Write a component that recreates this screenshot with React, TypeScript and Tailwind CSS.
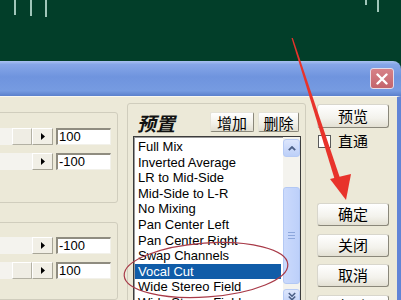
const PRESETS = [
  "Full Mix",
  "Inverted Average",
  "LR to Mid-Side",
  "Mid-Side to L-R",
  "No Mixing",
  "Pan Center Left",
  "Pan Center Right",
  "Swap Channels",
  "Vocal Cut",
  "Wide Stereo Field",
  "Wide Stereo Field",
];

const CJK = "font-['Noto_Sans_CJK_SC',sans-serif]";

function ArrowBtn() {
  return (
    <div className="w-[21px] h-[17px] flex items-center justify-center bg-[#f1efe6] border border-t-white border-l-white border-r-[#a7a597] border-b-[#a7a597]">
      <svg width="4" height="7" viewBox="0 0 4 7">
        <path d="M0 0 L4 3.5 L0 7 Z" fill="#000" />
      </svg>
    </div>
  );
}

function SliderRow({ value, thumb }: { value: string; thumb?: boolean }) {
  return (
    <div className="flex items-center h-[17px] pr-[6px]">
      <div className="flex-1 h-[17px] flex justify-end bg-[#f4f3ee]">
        {thumb && (
          <div className="w-[20px] h-[17px] bg-[#efede4] border border-t-white border-l-white border-r-[#b3b1a4] border-b-[#b3b1a4]" />
        )}
      </div>
      <ArrowBtn />
      <div className="ml-[3px] w-[55px] h-[17px] bg-white border-t-2 border-l-2 border-r border-b border-t-[#8f8c80] border-l-[#8f8c80] border-r-[#f2f1ea] border-b-[#f2f1ea] text-[13px] leading-[14px] pl-[1px] text-black">
        {value}
      </div>
    </div>
  );
}

function XpButton({ label, className = "" }: { label: string; className?: string }) {
  return (
    <div
      className={`w-[72px] h-[23px] rounded-[3px] border border-[#8a877a] border-t-[#d8d6cc] border-l-[#d8d6cc] bg-[linear-gradient(to_bottom,#ffffff,#f3f2ec_60%,#e3e0d3)] flex items-center justify-center text-[15px] text-black ${CJK} ${className}`}
    >
      {label}
    </div>
  );
}

function SmallButton({ label, w }: { label: string; w: string }) {
  return (
    <div
      className={`${w} h-[20px] rounded-[2px] border border-[#8a877a] border-t-[#e4e2d8] border-l-[#e4e2d8] bg-[linear-gradient(to_bottom,#ffffff,#f1efe7_60%,#e1ded1)] flex items-center justify-center text-[15px] leading-none text-black ${CJK}`}
    >
      {label}
    </div>
  );
}

export default function App() {
  return (
    <div className="relative w-[401px] h-[300px] overflow-hidden bg-[#023e29] font-['Liberation_Sans',sans-serif]">
      {/* waveform strip */}
      <div className="h-[61px]">
        <svg width="401" height="61">
          <g stroke="#d6f5ea" strokeWidth="1.5">
            <line x1="15" y1="0" x2="15" y2="15" />
            <line x1="31" y1="0" x2="31" y2="16" />
            <line x1="46" y1="0" x2="46" y2="17" />
            <line x1="366" y1="0" x2="366" y2="5" />
            <line x1="378" y1="0" x2="378" y2="12" />
          </g>
        </svg>
      </div>

      {/* dialog window */}
      <div className="flex flex-col h-[239px]">
        {/* title bar */}
        <div className="h-[35px] rounded-tr-[8px] flex items-center justify-end pr-[7px] bg-[linear-gradient(to_bottom,#a9c1f1_0%,#86a6e8_10%,#6f94de_45%,#769be1_85%,#5b80cc_100%)]">
          <div className="w-[24px] h-[21px] rounded-[3px] border border-[#e6dce8] bg-[linear-gradient(to_bottom,#d78288,#c3646c)] flex items-center justify-center">
            <svg width="12" height="12" viewBox="0 0 12 12">
              <path d="M1.5 1.5 L10.5 10.5 M10.5 1.5 L1.5 10.5" stroke="#fff" strokeWidth="2.4" strokeLinecap="round" />
            </svg>
          </div>
        </div>

        {/* body */}
        <div className="flex-1 flex bg-[#ece9d8] border-t border-t-[#f8f7f1] border-r-4 border-r-[#6184d6] min-h-0">
          {/* left groups */}
          <div className="w-[118px] flex flex-col">
            <div className="mt-[15px] -ml-[6px] h-[91px] border border-[#d0cdbd] rounded-[3px] flex flex-col gap-[8px] pt-[15px]">
              <SliderRow value="100" thumb />
              <SliderRow value="-100" />
            </div>
            <div className="mt-[19px] -ml-[6px] flex-1 border border-[#d0cdbd] rounded-[3px] flex flex-col gap-[8px] pt-[14px]">
              <SliderRow value="-100" />
              <SliderRow value="100" thumb />
            </div>
          </div>

          {/* preset group */}
          <div className="ml-[9px] mt-[6px] w-[179px] h-[240px] border border-[#d0cdbd] rounded-[3px] flex flex-col">
            <div className="flex items-center h-[20px] mt-[8px] pr-[6px]">
              <span className={`ml-[9px] text-[19px] font-bold italic text-[#111] leading-none ${CJK}`}>预置</span>
              <div className="flex-1" />
              <SmallButton label="增加" w="w-[44px]" />
              <div className="w-[4px]" />
              <SmallButton label="删除" w="w-[41px]" />
            </div>
            <div className="ml-[5px] mr-[4px] mt-[4px] flex-1 flex bg-white border border-[#3c3c3c] shadow-[inset_1px_1px_0_#9a9a9a]">
              <div className="flex-1 pt-[2px] pl-[1px]">
                {PRESETS.map((p, i) => (
                  <div
                    key={i}
                    className={`h-[15.6px] leading-[15.6px] text-[13px] pl-[3px] whitespace-nowrap ${
                      p === "Vocal Cut" ? "bg-[#105ca8] text-white" : "text-black"
                    }`}
                  >
                    {p}
                  </div>
                ))}
              </div>
              {/* list scrollbar */}
              <div className="w-[17px] ml-[2px] flex flex-col bg-[#f4f3ee] pt-[2px]">
                <div className="h-[18px] rounded-[3px] border border-[#b7cbf5] bg-[linear-gradient(to_bottom,#dde6fc,#bccff8)] flex items-center justify-center">
                  <svg width="8" height="5" viewBox="0 0 8 5">
                    <path d="M0.8 4.2 L4 1 L7.2 4.2" stroke="#4b5f86" strokeWidth="1.8" fill="none" />
                  </svg>
                </div>
                <div className="h-[30px]" />
                <div className="h-[97px] rounded-[3px] border border-[#b3c8f4] bg-[linear-gradient(to_right,#cbdafc,#bdd0fa)] flex flex-col items-center justify-center gap-[2px]">
                  <div className="w-[7px] h-px bg-[#8da7dc]" />
                  <div className="w-[7px] h-px bg-[#8da7dc]" />
                  <div className="w-[7px] h-px bg-[#8da7dc]" />
                </div>
                <div className="mt-[5px] h-[18px] rounded-[3px] border border-[#b7cbf5] bg-[linear-gradient(to_bottom,#dde6fc,#bccff8)] flex items-start justify-center pt-[2px]">
                  <svg width="8" height="8" viewBox="0 0 8 8">
                    <path d="M0.8 1 L4 4.2 L7.2 1 M0.8 4.5 L4 7.7 L7.2 4.5" stroke="#4b5f86" strokeWidth="1.6" fill="none" />
                  </svg>
                </div>
              </div>
            </div>
          </div>

          {/* right buttons */}
          <div className="ml-[11px] w-[72px] flex flex-col">
            <XpButton label="预览" className="mt-[7px] h-[24px]" />
            <div className="mt-[6px] flex items-center h-[14px]">
              <div className="ml-[1px] w-[13px] h-[13px] bg-white border border-[#5a5a5a]" />
              <span className={`ml-[7px] text-[15px] text-black ${CJK}`}>直通</span>
            </div>
            <XpButton label="确定" className="mt-[55px]" />
            <XpButton label="关闭" className="mt-[8px]" />
            <XpButton label="取消" className="mt-[7px]" />
            <XpButton label="帮助" className="mt-[8px]" />
          </div>
        </div>
      </div>

      {/* annotations drawn over the screenshot */}
      <svg className="absolute inset-0 pointer-events-none" width="401" height="300">
        <polygon points="291.5,38 292.8,38 341,181 335.5,182" fill="#e8332b" />
        <polygon points="330,179 351,174 346,200" fill="#e8332b" />
        <ellipse
          cx="206"
          cy="270"
          rx="82"
          ry="27"
          transform="rotate(-4 206 270)"
          fill="none"
          stroke="#a83a48"
          strokeWidth="1.2"
        />
      </svg>
    </div>
  );
}
